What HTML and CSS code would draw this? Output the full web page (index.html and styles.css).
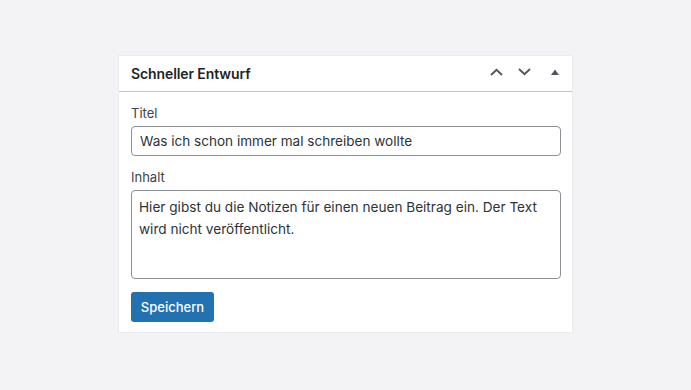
FILE: index.html
```html
<!DOCTYPE html>
<html lang="de">
<head>
<meta charset="utf-8">
<title>Schneller Entwurf</title>
<link rel="stylesheet" href="styles.css">
</head>
<body>
<div class="postbox">
  <div class="postbox-header">
    <h2 class="postbox-title">Schneller Entwurf</h2>
    <div class="handle-actions">
      <button class="handle-btn" aria-label="Nach oben">
        <svg width="13" height="8" viewBox="0 0 13 8"><path d="M1 7L6.5 1.8L12 7" fill="none" stroke="#50575e" stroke-width="1.9"/></svg>
      </button>
      <button class="handle-btn" aria-label="Nach unten">
        <svg width="13" height="8" viewBox="0 0 13 8"><path d="M1 1L6.5 6.2L12 1" fill="none" stroke="#50575e" stroke-width="1.9"/></svg>
      </button>
      <button class="handle-btn toggle" aria-label="Umschalten">
        <svg width="8" height="6" viewBox="0 0 8 6"><path d="M0 6L4 0.5L8 6Z" fill="#50575e"/></svg>
      </button>
    </div>
  </div>
  <form class="inside">
    <div class="field">
      <label class="label" for="title">Titel</label>
      <input class="input" id="title" type="text" value="Was ich schon immer mal schreiben wollte">
    </div>
    <div class="field">
      <label class="label" for="content">Inhalt</label>
      <textarea class="textarea" id="content">Hier gibst du die Notizen für einen neuen Beitrag ein. Der Text wird nicht veröffentlicht.</textarea>
    </div>
    <div class="actions">
      <button type="button" class="button-primary">Speichern</button>
    </div>
  </form>
</div>
</body>
</html>
```
FILE: styles.css
```css
* { box-sizing: border-box; }
html, body { margin: 0; padding: 0; }
body {
  background: #f3f3f5;
  font-family: Inter, "Noto Sans", sans-serif;
  color: #1d2327;
  padding: 55px 0 0 118px;
}
.postbox {
  width: 455px;
  height: 278px;
  background: #fff;
  border: 1px solid #ececee;
}
.postbox-header {
  height: 36px;
  border-bottom: 1px solid #c3c4c7;
  display: flex;
  align-items: center;
  justify-content: space-between;
  padding: 0 1px 0 12px;
}
.postbox-title {
  margin: 0;
  font-size: 14px;
  font-weight: 600;
  color: #1d2327;
  letter-spacing: -0.1px;
}
.handle-actions {
  display: flex;
  align-items: center;
  padding-bottom: 4px;
}
.handle-btn {
  border: 0;
  background: none;
  padding: 0;
  width: 28px;
  height: 26px;
  display: flex;
  align-items: center;
  justify-content: center;
  cursor: pointer;
}
.handle-btn.toggle { width: 33px; }
.inside {
  padding: 11px 12px 0 12px;
  display: flex;
  flex-direction: column;
}
.field { display: flex; flex-direction: column; }
.label {
  font-size: 13px;
  color: #3c434a;
  line-height: 20px;
  margin-bottom: 3px;
}
.input {
  width: 430px;
  height: 30px;
  border: 1px solid #8c8f94;
  border-radius: 4px;
  padding: 0 8px;
  font-family: inherit;
  font-size: 13.55px;
  color: #2c3338;
  margin-bottom: 11px;
}
.textarea {
  width: 430px;
  height: 89px;
  border: 1px solid #8c8f94;
  border-radius: 4px;
  padding: 6px 7px;
  font-family: inherit;
  font-size: 13.6px;
  line-height: 21.5px;
  color: #2c3338;
  resize: none;
  margin-bottom: 13px;
}
.actions { display: flex; }
.button-primary {
  background: #2271b1;
  color: #fff;
  border: 0;
  border-radius: 3px;
  height: 30px;
  width: 83px;
  font-family: inherit;
  font-size: 13px;
  font-weight: 500;
  padding: 0;
}
```
